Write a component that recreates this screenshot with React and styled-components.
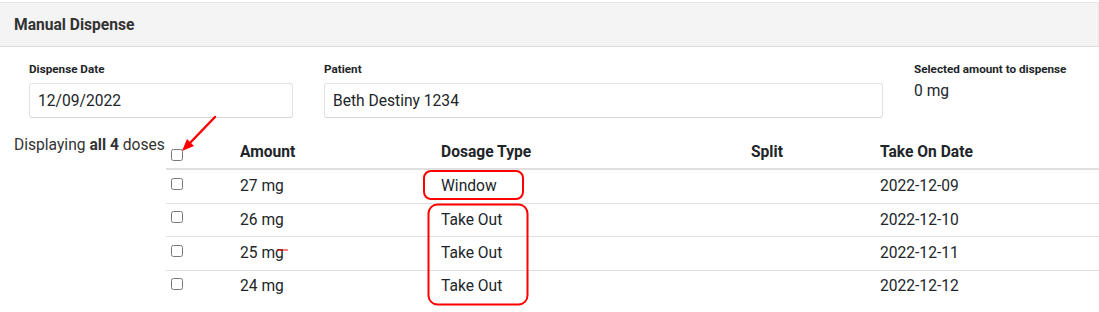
import React from "react";
import styled, { createGlobalStyle } from "styled-components";

const GlobalStyle = createGlobalStyle`
  body {
    margin: 0;
    background: #fff;
    font-family: Roboto, "Liberation Sans", Arial, sans-serif;
    color: #212529;
  }
  * { box-sizing: border-box; }
`;

const Page = styled.div`
  position: relative;
  width: 1099px;
  height: 312px;
  padding-top: 2px;
  overflow: hidden;
`;

const CardHeader = styled.div`
  height: 45px;
  display: flex;
  align-items: center;
  padding: 0 14px;
  background: #f4f4f4;
  border-top: 1px solid #e6e6e6;
  border-bottom: 1px solid #dcdcdc;
  border-right: 1px solid #e6e6e6;
  font-size: 15.6px;
  font-weight: 700;
  color: #333;
`;

const FormRow = styled.div`
  display: grid;
  grid-template-columns: 264px 559px 1fr;
  column-gap: 31px;
  padding: 15px 0 0 29px;
`;

const Field = styled.div`
  display: flex;
  flex-direction: column;
`;

const Label = styled.label`
  font-size: 11.7px;
  font-weight: 700;
  color: #212529;
  line-height: 14px;
  margin-bottom: 7px;
`;

const Input = styled.div`
  height: 35px;
  display: flex;
  align-items: center;
  padding: 0 8px;
  border: 1px solid #e2e2e2;
  border-bottom-color: #d6d6d6;
  border-radius: 3px;
  font-size: 15.6px;
  color: #212529;
`;

const Value = styled.div`
  font-size: 15.6px;
  line-height: 18px;
  color: #212529;
  margin-top: -1px;
`;

const ListArea = styled.div`
  display: flex;
  align-items: flex-start;
  margin-top: 18px;
`;

const Count = styled.div`
  width: 166px;
  margin-top: -2px;
  padding-left: 14px;
  font-size: 15.6px;
  line-height: 22px;
  color: #333;
  b { font-weight: 700; }
`;

const Table = styled.table`
  flex: 1;
  border-collapse: collapse;
  table-layout: fixed;
  font-size: 15.6px;
  line-height: 22.6px;
`;

const Th = styled.th`
  width: ${(p) => p.$w}px;
  text-align: left;
  font-weight: 700;
  padding: 4.9px 5px;
  border-bottom: 2px solid #e0e0e0;
  vertical-align: bottom;
`;

const Td = styled.td`
  padding: 4.9px 5px;
  border-top: 1px solid #e0e0e0;
  vertical-align: top;
`;

const Check = styled.input.attrs({ type: "checkbox" })`
  width: 12px;
  height: 12px;
  margin: ${(p) => (p.$head ? "4px 0 2px 0" : "2.5px 0 0 0")};
  display: block;
`;

const Overlay = styled.svg`
  position: absolute;
  left: 0;
  top: 0;
  pointer-events: none;
`;

const doses = [
  { amount: "27 mg", type: "Window", date: "2022-12-09" },
  { amount: "26 mg", type: "Take Out", date: "2022-12-10" },
  { amount: "25 mg", type: "Take Out", date: "2022-12-11" },
  { amount: "24 mg", type: "Take Out", date: "2022-12-12" },
];

export default function App() {
  return (
    <Page>
      <GlobalStyle />
      <CardHeader>Manual Dispense</CardHeader>
      <FormRow>
        <Field>
          <Label>Dispense Date</Label>
          <Input>12/09/2022</Input>
        </Field>
        <Field>
          <Label>Patient</Label>
          <Input>Beth Destiny 1234</Input>
        </Field>
        <Field>
          <Label>Selected amount to dispense</Label>
          <Value>0 mg</Value>
        </Field>
      </FormRow>
      <ListArea>
        <Count>
          Displaying <b>all 4</b> doses
        </Count>
        <Table>
          <thead>
            <tr>
              <Th $w={69}>
                <Check $head />
              </Th>
              <Th $w={201}>Amount</Th>
              <Th $w={310}>Dosage Type</Th>
              <Th $w={129}>Split</Th>
              <Th $w={224}>Take On Date</Th>
            </tr>
          </thead>
          <tbody>
            {doses.map((d) => (
              <tr key={d.date}>
                <Td>
                  <Check />
                </Td>
                <Td>{d.amount}</Td>
                <Td>{d.type}</Td>
                <Td></Td>
                <Td>{d.date}</Td>
              </tr>
            ))}
          </tbody>
        </Table>
      </ListArea>
      <Overlay width="1099" height="312" viewBox="0 0 1099 312">
        <line x1="215" y1="117" x2="188" y2="145" stroke="#f00" strokeWidth="2.5" strokeLinecap="round" />
        <polygon points="182,151 194,146 187,139" fill="#f00" />
        <rect x="424" y="171" width="99" height="28" rx="7" fill="none" stroke="#f00" strokeWidth="2" />
        <rect x="428.5" y="204.5" width="99" height="100" rx="9" fill="none" stroke="#f00" strokeWidth="2" />
        <line x1="277" y1="250" x2="288" y2="250" stroke="#f00" strokeWidth="1" />
      </Overlay>
    </Page>
  );
}
